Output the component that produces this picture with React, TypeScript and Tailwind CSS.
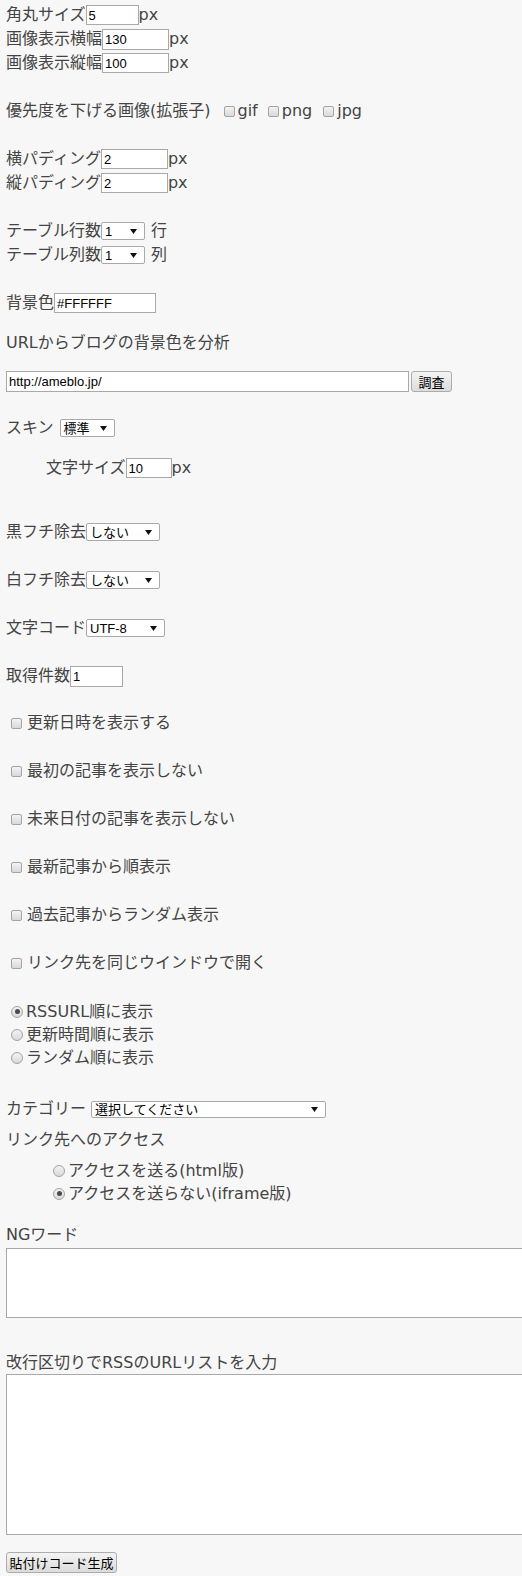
import React from 'react';

// ===== small form pieces =====

const TextBox: React.FC<{ value: string; className: string }> = ({ value, className }) => (
  <input
    type="text"
    defaultValue={value}
    className={`border border-[#a9a9a9] bg-white px-[2px] text-[13px] text-black font-['Liberation_Sans','Noto_Sans_CJK_JP',sans-serif] outline-none ${className}`}
  />
);

const SelectBox: React.FC<{ value: string; className: string }> = ({ value, className }) => (
  <div
    className={`flex items-center justify-between border border-[#a9a9a9] rounded-[2px] bg-white pl-[3px] pr-[7px] text-[13px] leading-none text-black font-['Liberation_Sans','Noto_Sans_CJK_JP',sans-serif] ${className}`}
  >
    <span>{value}</span>
    <svg width="7" height="5" viewBox="0 0 7 5">
      <polygon points="0,0 7,0 3.5,5" fill="#111" />
    </svg>
  </div>
);

const CheckBox: React.FC<{ className?: string }> = ({ className = '' }) => (
  <span
    className={`inline-block w-[11px] h-[11px] shrink-0 rounded-[2px] border border-[#a3a3a3] bg-gradient-to-b from-[#f3f3f3] to-[#d9d9d9] ${className}`}
  />
);

const Radio: React.FC<{ checked?: boolean; className?: string }> = ({ checked, className = '' }) => (
  <span
    className={`flex items-center justify-center w-[12px] h-[12px] shrink-0 rounded-full border border-[#a3a3a3] bg-gradient-to-b from-[#f3f3f3] to-[#d9d9d9] ${className}`}
  >
    {checked && <span className="w-[5px] h-[5px] rounded-full bg-[#4a4a4a]" />}
  </span>
);

const Button: React.FC<{ label: string; className?: string }> = ({ label, className = '' }) => (
  <button
    className={`flex items-center justify-center h-[21px] border border-[#acacac] rounded-[3px] bg-gradient-to-b from-[#f4f4f4] to-[#dcdcdc] text-[13px] leading-none text-black font-['Noto_Sans_CJK_JP',sans-serif] ${className}`}
  >
    {label}
  </button>
);

const Row: React.FC<{ className?: string; children: React.ReactNode }> = ({ className = '', children }) => (
  <div className={`flex items-center h-6 whitespace-nowrap ${className}`}>{children}</div>
);

const checks = [
  '更新日時を表示する',
  '最初の記事を表示しない',
  '未来日付の記事を表示しない',
  '最新記事から順表示',
  '過去記事からランダム表示',
  'リンク先を同じウインドウで開く',
];

const App: React.FC = () => {
  return (
    <div className="min-h-screen w-full overflow-hidden bg-[#f7f7f7] pt-[3px] pl-[6px] text-[16px] text-[#444] font-['DejaVu_Sans','Noto_Sans_CJK_JP',sans-serif]">
      {/* size settings */}
      <Row>
        角丸サイズ<TextBox value="5" className="w-[53px] h-[20px]" />px
      </Row>
      <Row>
        画像表示横幅<TextBox value="130" className="w-[67px] h-[21px]" />px
      </Row>
      <Row>
        画像表示縦幅<TextBox value="100" className="w-[67px] h-[20px]" />px
      </Row>

      <Row className="mt-6">
        優先度を下げる画像(拡張子)
        <CheckBox className="ml-[13px]" />
        <span className="ml-[3px]">gif</span>
        <CheckBox className="ml-[10px]" />
        <span className="ml-[3px]">png</span>
        <CheckBox className="ml-[11px]" />
        <span className="ml-[3px]">jpg</span>
      </Row>

      <Row className="mt-6">
        横パディング<TextBox value="2" className="w-[67px] h-[20px]" />px
      </Row>
      <Row>
        縦パディング<TextBox value="2" className="w-[67px] h-[20px]" />px
      </Row>

      <Row className="mt-6">
        テーブル行数<SelectBox value="1" className="w-[44px] h-[18px]" />
        <span className="ml-[6px]">行</span>
      </Row>
      <Row>
        テーブル列数<SelectBox value="1" className="w-[44px] h-[18px]" />
        <span className="ml-[6px]">列</span>
      </Row>

      <Row className="mt-6">
        背景色<TextBox value="#FFFFFF" className="w-[102px] h-[20px]" />
      </Row>

      <Row className="mt-[16px]">URLからブログの背景色を分析</Row>
      <Row className="mt-[14px]">
        <TextBox value="http://ameblo.jp/" className="w-[403px] h-[21px]" />
        <Button label="調査" className="ml-[2px] w-[41px]" />
      </Row>

      <Row className="mt-[23px]">
        スキン<SelectBox value="標準" className="ml-[6px] w-[55px] h-[18px]" />
      </Row>
      <Row className="mt-[16px] pl-[40px]">
        文字サイズ<TextBox value="10" className="w-[46px] h-[20px]" />px
      </Row>

      <Row className="mt-[40px]">
        黒フチ除去<SelectBox value="しない" className="w-[74px] h-[18px]" />
      </Row>
      <Row className="mt-6">
        白フチ除去<SelectBox value="しない" className="w-[74px] h-[18px]" />
      </Row>
      <Row className="mt-6">
        文字コード<SelectBox value="UTF-8" className="w-[79px] h-[18px]" />
      </Row>
      <Row className="mt-6">
        取得件数<TextBox value="1" className="w-[53px] h-[21px]" />
      </Row>

      {/* option checkboxes */}
      <div className="mt-[23px] flex flex-col gap-6">
        {checks.map((c) => (
          <Row key={c}>
            <CheckBox className="ml-[5px]" />
            <span className="ml-[5px]">{c}</span>
          </Row>
        ))}
      </div>

      {/* order radios */}
      <div className="mt-[25px]">
        {[
          ['RSSURL順に表示', true],
          ['更新時間順に表示', false],
          ['ランダム順に表示', false],
        ].map(([t, on]) => (
          <div key={t as string} className="flex items-center h-[23px] whitespace-nowrap">
            <Radio checked={on as boolean} className="ml-[5px]" />
            <span className="ml-[3px]">{t as string}</span>
          </div>
        ))}
      </div>

      <Row className="mt-[28px]">
        カテゴリー<SelectBox value="選択してください" className="ml-[5px] w-[235px] h-[17px]" />
      </Row>

      <Row className="mt-[7px]">リンク先へのアクセス</Row>
      <div className="mt-[7px]">
        <div className="flex items-center h-[23px] whitespace-nowrap">
          <Radio className="ml-[47px]" />
          <span className="ml-[3px]">アクセスを送る(html版)</span>
        </div>
        <div className="flex items-center h-[23px] whitespace-nowrap">
          <Radio checked className="ml-[47px]" />
          <span className="ml-[3px]">アクセスを送らない(iframe版)</span>
        </div>
      </div>

      <Row className="mt-[18px]">NGワード</Row>
      <textarea className="mt-[1px] block w-[580px] h-[70px] border border-[#a9a9a9] bg-white outline-none resize-none" />

      <div className="mt-[33px] flex items-center h-[23px] whitespace-nowrap">改行区切りでRSSのURLリストを入力</div>
      <textarea className="block w-[580px] h-[161px] border border-[#a9a9a9] bg-white outline-none resize-none" />

      <Button label="貼付けコード生成" className="mt-[17px] w-[111px]" />
    </div>
  );
};

export default App;
